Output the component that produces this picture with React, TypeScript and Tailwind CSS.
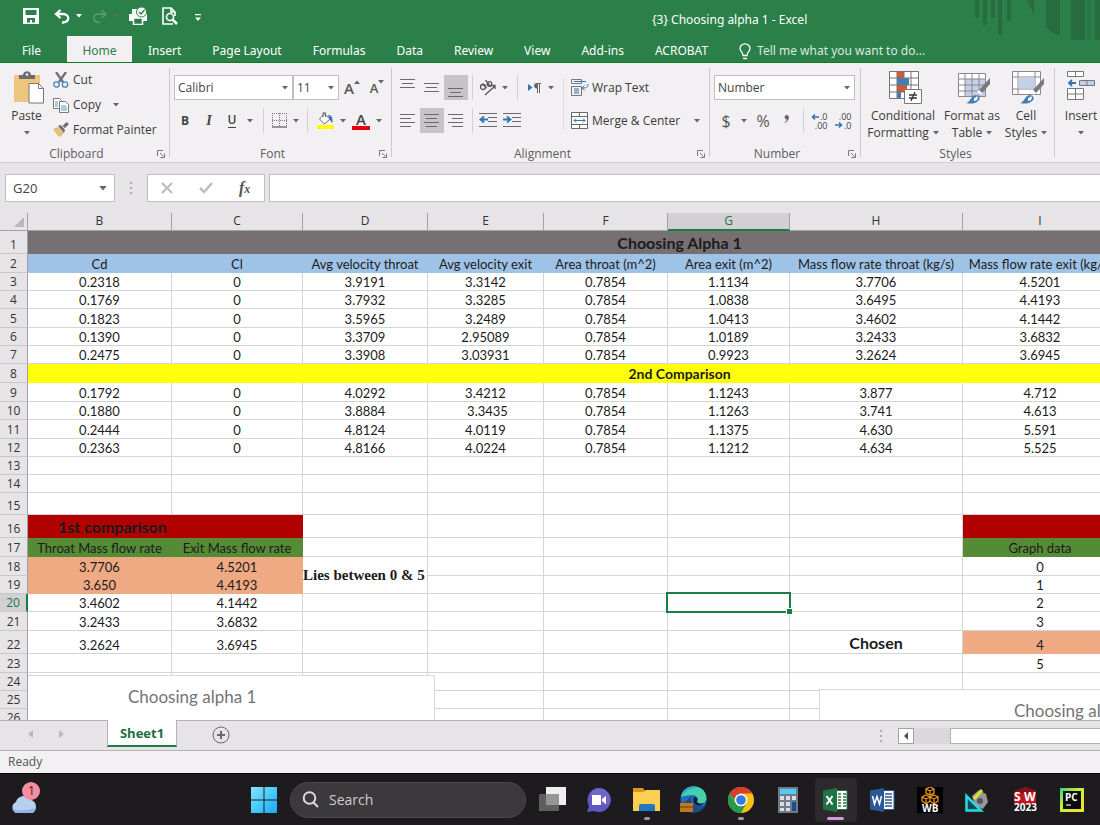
import type { ReactNode } from "react";
import clsx from "clsx";

const TABS = [
  "Insert",
  "Page Layout",
  "Formulas",
  "Data",
  "Review",
  "View",
  "Add-ins",
  "ACROBAT",
];

type Tone = "plain" | "gray" | "blue" | "yellow" | "red" | "green" | "peach";

interface Cell {
  v?: string;
  tone?: Tone;
  span?: number;
  rows?: number;
  cls?: string;
  selected?: boolean;
}

interface SheetRow {
  h: string;
  cells: Cell[];
}

const toneClass: Record<Tone, string> = {
  plain: "border-[#d4d3d5] bg-white",
  gray: "border-[#767073] bg-[#767073]",
  blue: "border-[#9fc3e6] bg-[#9fc3e6]",
  yellow: "border-[#ffff0c] bg-[#ffff0c]",
  red: "border-[#b00000] bg-[#b00000]",
  green: "border-[#568b35] bg-[#568b35]",
  peach: "border-[#efa983] bg-[#efa983]",
};

const COLUMNS = [
  { name: "B", w: "w-[144px]" },
  { name: "C", w: "w-[131px]" },
  { name: "D", w: "w-[125px]" },
  { name: "E", w: "w-[116px]" },
  { name: "F", w: "w-[124px]" },
  { name: "G", w: "w-[122px]" },
  { name: "H", w: "w-[173px]" },
  { name: "I", w: "w-[155px]" },
  { name: "J", w: "w-[214px]" },
];

const text = (...values: string[]): Cell[] => values.map((v) => ({ v }));
const blank = (count: number): Cell[] => Array.from({ length: count }, () => ({}));
const tinted = (tone: Tone, ...values: string[]): Cell[] =>
  values.map((v) => ({ v, tone }));

const ROWS: SheetRow[] = [
  {
    h: "h-[23px]",
    cells: [{ v: "Choosing Alpha 1", tone: "gray", span: 9, cls: "text-[16px] leading-5 font-bold" }],
  },
  {
    h: "h-[19px]",
    cells: tinted(
      "blue",
      "Cd",
      "Cl",
      "Avg velocity throat",
      "Avg velocity exit",
      "Area throat (m^2)",
      "Area exit (m^2)",
      "Mass flow rate throat (kg/s)",
      "Mass flow rate exit (kg/s)",
      ""
    ),
  },
  { h: "h-[18px]", cells: text("0.2318", "0", "3.9191", "3.3142", "0.7854", "1.1134", "3.7706", "4.5201", "") },
  { h: "h-[18px]", cells: text("0.1769", "0", "3.7932", "3.3285", "0.7854", "1.0838", "3.6495", "4.4193", "") },
  { h: "h-[19px]", cells: text("0.1823", "0", "3.5965", "3.2489", "0.7854", "1.0413", "3.4602", "4.1442", "") },
  { h: "h-[18px]", cells: text("0.1390", "0", "3.3709", "2.95089", "0.7854", "1.0189", "3.2433", "3.6832", "") },
  { h: "h-[18px]", cells: text("0.2475", "0", "3.3908", "3.03931", "0.7854", "0.9923", "3.2624", "3.6945", "") },
  {
    h: "h-[19px]",
    cells: [{ v: "2nd Comparison", tone: "yellow", span: 9, cls: "text-[14px] leading-4 font-bold" }],
  },
  { h: "h-[19px]", cells: text("0.1792", "0", "4.0292", "3.4212", "0.7854", "1.1243", "3.877", "4.712", "") },
  {
    h: "h-[18px]",
    cells: [
      ...text("0.1880", "0", "3.8884"),
      { v: "3.3435", cls: "pl-1" },
      ...text("0.7854", "1.1263", "3.741", "4.613", ""),
    ],
  },
  { h: "h-[19px]", cells: text("0.2444", "0", "4.8124", "4.0119", "0.7854", "1.1375", "4.630", "5.591", "") },
  { h: "h-[18px]", cells: text("0.2363", "0", "4.8166", "4.0224", "0.7854", "1.1212", "4.634", "5.525", "") },
  { h: "h-[18px]", cells: blank(9) },
  { h: "h-[18px]", cells: blank(9) },
  { h: "h-[22px]", cells: blank(9) },
  {
    h: "h-[23px]",
    cells: [
      {
        v: "1st comparison",
        tone: "red",
        span: 2,
        cls: "pl-[30px] text-left text-[16px] leading-5 font-bold",
      },
      ...blank(5),
      { tone: "red", span: 2 },
    ],
  },
  {
    h: "h-[19px]",
    cells: [
      ...tinted("green", "Throat Mass flow rate", "Exit Mass flow rate"),
      ...blank(5),
      ...tinted("green", "Graph data", ""),
    ],
  },
  {
    h: "h-[19px]",
    cells: [
      ...tinted("peach", "3.7706", "4.5201"),
      {
        v: "Lies between 0 & 5",
        rows: 2,
        cls: "text-left align-middle font-['Liberation_Serif',serif] text-[15px] leading-5 font-bold",
      },
      ...blank(4),
      ...text("0", ""),
    ],
  },
  {
    h: "h-[18px]",
    cells: [...tinted("peach", "3.650", "4.4193"), ...blank(4), ...text("1", "")],
  },
  {
    h: "h-[18px]",
    cells: [
      ...text("3.4602", "4.1442"),
      ...blank(3),
      { selected: true },
      {},
      ...text("2", ""),
    ],
  },
  { h: "h-[19px]", cells: [...text("3.2433", "3.6832"), ...blank(5), ...text("3", "")] },
  {
    h: "h-[23px]",
    cells: [
      ...text("3.2624", "3.6945"),
      ...blank(4),
      { v: "Chosen", cls: "text-[16px] leading-5 font-bold" },
      ...tinted("peach", "4", ""),
    ],
  },
  { h: "h-[19px]", cells: [...blank(7), ...text("5", "")] },
  { h: "h-[18px]", cells: blank(9) },
  { h: "h-[18px]", cells: blank(9) },
  { h: "h-[18px]", cells: blank(9) },
];

function Caret({ className }: { className?: string }) {
  return (
    <svg viewBox="0 0 6 4" className={clsx("h-1 w-1.5 shrink-0 fill-[#666]", className)}>
      <path d="M0 0h6L3 3.5z" />
    </svg>
  );
}

function Tool({
  label,
  w = "w-6",
  active,
  children,
}: {
  label: string;
  w?: string;
  active?: boolean;
  children: ReactNode;
}) {
  return (
    <button
      type="button"
      aria-label={label}
      className={clsx("flex h-[25px] shrink-0 items-center justify-center", w, active && "bg-[#c6c4c6]")}
    >
      {children}
    </button>
  );
}

function Sep({ w }: { w: string }) {
  return (
    <span className={clsx("flex h-[25px] shrink-0 justify-center", w)}>
      <span className="w-px bg-[#d2d0d2]" />
    </span>
  );
}

function Group({
  name,
  w,
  launcher = true,
  children,
}: {
  name: string;
  w: string;
  launcher?: boolean;
  children: ReactNode;
}) {
  return (
    <section aria-label={name} className={clsx("flex shrink-0", w)}>
      <div className="flex min-w-0 flex-1 flex-col">
        <div className="flex-1">{children}</div>
        <div className="flex h-4 items-center pr-1">
          <span className="flex-1 text-center leading-4 text-[#5f5d5f]">{name}</span>
          {launcher && (
            <button type="button" aria-label={`${name} settings`} className="ml-1">
              <svg viewBox="0 0 8 8" className="h-2 w-2 fill-none stroke-[#777]">
                <path d="M.5 6V.5H6M3 3l3.5 3.5M7.500 3.500v4h-4" />
              </svg>
            </button>
          )}
        </div>
      </div>
      <span className="my-[5px] w-px bg-[#cbc9cb]" />
    </section>
  );
}

function Picker({ label, value, w }: { label: string; value: string; w: string }) {
  return (
    <span className={clsx("relative flex h-[25px] items-center", w)}>
      <select
        aria-label={label}
        className="h-full w-full appearance-none border border-[#c0bec0] bg-white pl-[3px] text-[#444]"
      >
        <option>{value}</option>
      </select>
      <Caret className="pointer-events-none absolute right-[5px]" />
    </span>
  );
}

// bars holds the x range of each line, top to bottom
function Lines({ top = 2, bars }: { top?: number; bars: [number, number][] }) {
  return (
    <svg viewBox="0 0 16 18" className="h-[18px] w-4 stroke-[#6b696b]">
      {bars.map(([a, b], i) => (
        <path key={i} d={`M${a} ${top + i * 4 + 0.5}H${b}`} />
      ))}
    </svg>
  );
}

function TitleBar() {
  return (
    <header className="relative flex h-[63px] shrink-0 flex-col overflow-hidden border-b border-[#107c1c] bg-[#2b804a] font-['Noto_Sans',sans-serif] text-white">
      <svg viewBox="0 0 126 42" className="absolute top-0 right-0 h-[42px] w-[126px] fill-[#266c3f]">
        <path d="M1 0h4v18H1zM9 0h4v25H9zM17 0h4v18h-4zM24 0h4v36l-4-3zM33 0h4v21h-4zM53 0h7v15zM72 0h14v35q-8-1-14-8zM97 0h14v40H97zM121 0h5v40h-5z" />
        <path d="M113 0h4v40h-4z" opacity=".5" />
      </svg>
      <div className="flex h-[37px] items-center">
        <div className="mb-1 flex w-[652px] items-center pl-[23px]">
          <button type="button" aria-label="Save" className="w-[31px]">
            <svg viewBox="0 0 16 16" className="h-4 w-4">
              <path d="M0 0h16v16H0z" fill="#fff" />
              <path d="M2.500 2h11v5h-11zM4 10h8v4.500H9V12H7v2.500H4z" fill="#2b804a" />
            </svg>
          </button>
          <button type="button" aria-label="Undo" className="flex w-[38px] items-center gap-1.5">
            <svg viewBox="0 0 16 15" className="h-[15px] w-4 fill-none stroke-white stroke-[2.3]">
              <path d="M6.500 1L2 5l4.500 4M2 5h7c7 0 7 8 0 8.500H8" />
            </svg>
            <Caret className="fill-white" />
          </button>
          <button type="button" aria-label="Redo" disabled className="flex w-[37px] items-center gap-1.5">
            <svg viewBox="0 0 16 15" className="h-[15px] w-4 fill-none stroke-[#5b9c72] stroke-[1.5]">
              <path d="M9.500 1L14 5l-4.500 4M14 5H7C0 5 0 13 7 13.500h1" />
            </svg>
            <Caret className="fill-[#5b9c72]" />
          </button>
          <button type="button" aria-label="Quick print" className="w-[33px]">
            <svg viewBox="0 0 18 18" className="h-[18px] w-[18px]">
              <path d="M3 2h6v5H3zM0 7h18v7H0z" fill="#fff" />
              <path d="M4.500 11h9v6.500h-9z" fill="#2b804a" stroke="#fff" strokeWidth="1.500" />
              <circle cx="12.500" cy="5" r="5" fill="#fff" stroke="#2b804a" />
              <path d="M10 5l2 2 3.500-4" fill="none" stroke="#2b804a" strokeWidth="1.500" />
            </svg>
          </button>
          <button type="button" aria-label="Print preview" className="w-[33px]">
            <svg viewBox="0 0 16 18" className="h-[18px] w-4 fill-none stroke-white stroke-[1.6]">
              <path d="M11 17H1V1h8l4 4v4" />
              <path d="M9 1v4h4" />
              <circle cx="8" cy="10" r="3.500" />
              <path d="M10.500 12.500l4.500 4.500" strokeWidth="2.500" />
            </svg>
          </button>
          <button type="button" aria-label="Customize toolbar">
            <svg viewBox="0 0 6 8" className="mt-1 h-2 w-1.5 fill-white">
              <path d="M0 0h6v1.300H0zM0 3.500h6L3 7z" />
            </svg>
          </button>
        </div>
        <h1 className="mt-1 text-[12px] leading-4">{"{3} Choosing alpha 1 - Excel"}</h1>
      </div>
      <nav className="flex h-[26px]">
        <button type="button" className="mr-1 w-[63px] pt-1">
          File
        </button>
        <button type="button" className="w-[65px] bg-[#f2f0f2] pt-1 text-[#2f7d50]">
          Home
        </button>
        {TABS.map((tab) => (
          <button key={tab} type="button" className="pt-1 pr-[15px] pl-4">
            {tab}
          </button>
        ))}
        <button type="button" className="flex items-center gap-1.5 pt-1 pl-4 text-[#d9eadf]">
          <svg viewBox="0 0 12 17" className="h-[17px] w-3 fill-none stroke-white stroke-[1.3]">
            <path d="M4 12.500C4 9 1 8.500 1 5.500a5 4.700 0 0 1 10 0C11 8.500 8 9 8 12.500zM4 15.500h4" />
          </svg>
          Tell me what you want to do...
        </button>
      </nav>
    </header>
  );
}

function ClipboardGroup() {
  return (
    <Group name="Clipboard" w="w-[170px]">
      <div className="flex">
        <button type="button" className="flex w-[53px] flex-col items-center pt-2">
          <svg viewBox="0 0 30 33" className="ml-1 h-[33px] w-[30px]">
            <path d="M0 4h26v27H0z" fill="#edc57c" />
            <path d="M5 8V4h4c0-5 8-5 8 0h4v4z" fill="#6e6c6e" />
            <circle cx="13" cy="3.500" r="1.300" fill="#f2f0f2" />
            <path d="M15 12.500h9.500l5 5V32H15z" fill="#fff" stroke="#777" />
            <path d="M24.500 12.500v5h5" fill="none" stroke="#777" />
          </svg>
          <span className="mt-1 leading-4">Paste</span>
          <Caret className="mt-[7px]" />
        </button>
        <div className="flex flex-col gap-2 pt-2">
          <button type="button" className="flex h-[17px] items-center gap-1">
            <svg viewBox="0 0 16 16" className="h-4 w-4 fill-none">
              <path d="M3 0l7 10M13 0L6 10" stroke="#6e6c6e" strokeWidth="2.200" />
              <circle cx="3.500" cy="12.500" r="2.700" stroke="#4a86b8" strokeWidth="1.300" />
              <circle cx="12" cy="12.500" r="2.700" stroke="#4a86b8" strokeWidth="1.300" />
            </svg>
            Cut
          </button>
          <button type="button" className="flex h-[17px] items-center gap-1">
            <svg viewBox="0 0 16 16" className="h-4 w-4 fill-white stroke-[#777]">
              <path d="M.5 1.500h6l2 2v8h-8z" />
              <path d="M6.500 4.500h6l3 3v8h-9z" />
              <path d="M2 5h3M2 7h3M2 9h3M8 9h5M8 11h6M8 13h6" stroke="#5b93c2" />
            </svg>
            Copy
            <Caret className="ml-2" />
          </button>
          <button type="button" className="flex h-[17px] items-center gap-1">
            <svg viewBox="0 0 16 15" className="h-[15px] w-4">
              <path d="M0 7l5-2 6 6-4 4q-3-1-7-8z" fill="#e5be7d" />
              <path d="M5 4l3-1 4 5-1 3zM9.500 4l4-4L16 2l-4 4z" fill="#6e6c6e" />
            </svg>
            Format Painter
          </button>
        </div>
      </div>
    </Group>
  );
}

function FontGroup() {
  return (
    <Group name="Font" w="w-[222px]">
      <div className="flex flex-col gap-2 pt-3">
        <div className="flex pl-1">
          <Picker label="Font name" value="Calibri" w="w-[119px]" />
          <Picker label="Font size" value="11" w="w-[46px]" />
          <Tool label="Increase font size" w="w-[26px]">
            <span className="text-[15px] leading-4 font-semibold text-[#555]">A</span>
            <Caret className="mb-3 rotate-180 fill-[#2f76b0]" />
          </Tool>
          <Tool label="Decrease font size" w="w-6">
            <span className="text-[13px] leading-4 font-semibold text-[#555]">A</span>
            <Caret className="mb-3 fill-[#2f76b0]" />
          </Tool>
        </div>
        <div className="flex pl-[3px] text-[#444]">
          <Tool label="Bold">
            <b>B</b>
          </Tool>
          <Tool label="Italic">
            <i className="font-['Liberation_Serif',serif] text-[14px] font-bold">I</i>
          </Tool>
          <Tool label="Underline" w="w-[22px]">
            <span className="border-b border-[#444] leading-[14px] font-semibold">U</span>
          </Tool>
          <Tool label="Underline style" w="w-[14px]">
            <Caret />
          </Tool>
          <Sep w="w-3" />
          <Tool label="Borders" w="w-5">
            <svg viewBox="0 0 15 15" className="h-[15px] w-[15px] fill-none stroke-[#777]">
              <path d="M.5 0v13M7.500 0v13M14.500 0v13M0 .5h15M0 7.500h15" strokeDasharray="1 1" />
              <path d="M0 14h15" strokeWidth="1.500" />
            </svg>
          </Tool>
          <Tool label="Border style" w="w-[14px]">
            <Caret />
          </Tool>
          <Sep w="w-2" />
          <Tool label="Fill color" w="w-7">
            <svg viewBox="0 0 17 17" className="h-[17px] w-[17px]">
              <path d="M0 13h17v4H0z" fill="#ff0" />
              <path d="M2.500 7l5-5 5.500 5-5.500 5z" fill="#fff" stroke="#666" />
              <path d="M6 5V.8h2.500V5" fill="none" stroke="#666" />
              <path d="M11 3c4 0 5 3 4.500 8-2-1-2-3-3-4.500z" fill="#3a79b0" />
            </svg>
          </Tool>
          <Tool label="Fill choices" w="w-2">
            <Caret />
          </Tool>
          <Tool label="Font color" w="w-7">
            <span className="border-b-4 border-[#e80000] px-1 text-[15px] leading-[14px] font-semibold">A</span>
          </Tool>
          <Tool label="Font color choices" w="w-2">
            <Caret />
          </Tool>
        </div>
      </div>
    </Group>
  );
}

function AlignmentGroup() {
  return (
    <Group name="Alignment" w="w-[318px]">
      <div className="flex pt-3">
        <div className="flex w-[167px] flex-col gap-2 pl-1">
          <div className="flex">
            <Tool label="Top align">
              <Lines top={0} bars={[[0, 15], [2, 13], [0, 15]]} />
            </Tool>
            <Tool label="Middle align">
              <Lines top={4} bars={[[0, 15], [2, 13], [0, 15]]} />
            </Tool>
            <Tool label="Bottom align" active>
              <Lines top={9} bars={[[0, 15], [2, 13], [0, 15]]} />
            </Tool>
            <Sep w="w-2" />
            <Tool label="Orientation">
              <svg viewBox="0 0 18 16" className="h-4 w-[18px] fill-none stroke-[#555] stroke-[1.3]">
                <circle cx="4" cy="7" r="2.500" />
                <path d="M3.500 3.500l4 4.500M6.500 0l5 6.500" />
                <circle cx="10.500" cy="4" r="2.300" />
                <path d="M6 15L16 6M12.500 5.500H16V9" />
              </svg>
            </Tool>
            <Tool label="Orientation choices" w="w-[10px]">
              <Caret />
            </Tool>
            <Sep w="w-[14px]" />
            <Tool label="Text direction" w="w-5">
              <svg viewBox="0 0 13 10" className="h-2.5 w-[13px]">
                <path d="M0 1l4.500 3.500L0 8z" fill="#2f76b0" />
                <path d="M9 0h4v1h-1v9h-1V1h-1v9H9V5.500C5 5.500 5 0 9 0z" fill="#666" />
              </svg>
            </Tool>
            <Tool label="Direction choices" w="w-[14px]">
              <Caret />
            </Tool>
          </div>
          <div className="flex">
            <Tool label="Align left">
              <Lines bars={[[0, 15], [0, 11], [0, 15], [0, 11]]} />
            </Tool>
            <Tool label="Center" active>
              <Lines bars={[[0, 15], [2, 13], [0, 15], [2, 13]]} />
            </Tool>
            <Tool label="Align right">
              <Lines bars={[[0, 15], [4, 15], [0, 15], [4, 15]]} />
            </Tool>
            <Sep w="w-2" />
            <Tool label="Decrease indent">
              <svg viewBox="0 0 18 15" className="h-[15px] w-[18px] fill-none stroke-[#6b696b]">
                <path d="M0 .5h18M9 4.500h9M9 8.500h9M0 13.500h18" />
                <path d="M9 6.500H2M5 3.500l-3.500 3L5 9.500" stroke="#2f76b0" strokeWidth="1.800" />
              </svg>
            </Tool>
            <Tool label="Increase indent">
              <svg viewBox="0 0 18 15" className="h-[15px] w-[18px] fill-none stroke-[#6b696b]">
                <path d="M0 .5h18M9 4.500h9M9 8.500h9M0 13.500h18" />
                <path d="M0 6.500h7M4 3.500l3.500 3L4 9.500" stroke="#2f76b0" strokeWidth="1.800" />
              </svg>
            </Tool>
          </div>
        </div>
        <span className="my-1 mr-[7px] ml-1 w-px bg-[#dddbdd]" />
        <div className="flex flex-col gap-2">
          <button type="button" className="flex h-[25px] items-center gap-[3px]">
            <svg viewBox="0 0 18 17" className="h-[17px] w-[18px] fill-none stroke-[#777]">
              <path d="M.5.500h10v4H.5zM.5 7.500h10v9H.5z" />
              <path d="M3 2.500h12M3 10h5M3 12h5M3 14h5M17 5c0 4-2 4-6 4M13.500 6.500L11 9l2.500 2.500" stroke="#2f76b0" />
            </svg>
            Wrap Text
          </button>
          <button type="button" className="flex h-[25px] items-center gap-1">
            <svg viewBox="0 0 17 17" className="h-[17px] w-[17px] fill-white stroke-[#6b696b]">
              <path d="M.5.500h16v16H.5zM.5 4.500h16M.5 12.500h16M8.500.500v4M8.500 12.500v4" />
              <path d="M3 8.500h11M5 6.500l-2 2 2 2M12 6.500l2 2-2 2" fill="none" stroke="#2f76b0" />
            </svg>
            Merge &amp; Center
            <Caret className="ml-2.5" />
          </button>
        </div>
      </div>
    </Group>
  );
}

function DecimalIcon({ more }: { more?: boolean }) {
  return (
    <span className="relative flex w-[17px] flex-col text-[9px] leading-[9px] text-[#444]">
      <span className="text-right">{more ? ".0" : ".00"}</span>
      <span className="text-right">{more ? ".00" : ".0"}</span>
      <svg
        viewBox="0 0 8 6"
        className={clsx("absolute left-0 h-1.5 w-2 fill-none stroke-[#2f76b0]", more ? "top-0.5" : "bottom-0.5")}
      >
        <path d={more ? "M8 3H1M4 .5L1.500 3 4 5.500" : "M0 3h6.500M4 .5L6.500 3 4 5.500"} strokeWidth="1.500" />
      </svg>
    </span>
  );
}

function NumberGroup() {
  return (
    <Group name="Number" w="w-[151px]">
      <div className="flex flex-col gap-2 pt-3 pl-1">
        <Picker label="Number format" value="Number" w="w-[141px]" />
        <div className="flex text-[#555]">
          <Tool label="Currency">
            <span className="text-[16px]">$</span>
          </Tool>
          <Tool label="Currency choices" w="w-3">
            <Caret />
          </Tool>
          <Tool label="Percent" w="w-[26px]">
            <span className="text-[16px]">%</span>
          </Tool>
          <Tool label="Comma style" w="w-5">
            <svg viewBox="0 0 5 8" className="mb-1 h-2 w-[5px] fill-[#666]">
              <path d="M2.500 0C6 0 6 5 1 8L.5 7.500Q3 6 3 4.500C0 5 0 0 2.500 0z" />
            </svg>
          </Tool>
          <Sep w="w-[14px]" />
          <Tool label="Increase decimal" w="w-[18px]">
            <DecimalIcon more />
          </Tool>
          <Tool label="Decrease decimal" w="w-[30px]">
            <DecimalIcon />
          </Tool>
        </div>
      </div>
    </Group>
  );
}

function Brush() {
  return (
    <>
      <path d="M32 7v6l-8 9-3-3z" fill="#7a787a" />
      <path d="M21 19l3 3-2 2-3-3z" fill="#fff" />
      <path d="M8 32c5-1 4-7 10-8 4 1 5 4 2 6-3 3-7 3-12 2z" fill="#3f7fb5" />
      <path d="M16 27q2 0 3-2l1 2q-1 3-4 3z" fill="#fff" />
    </>
  );
}

function BigTool({ lines, w, children }: { lines: [string, string?]; w: string; children: ReactNode }) {
  return (
    <button type="button" className={clsx("flex shrink-0 flex-col items-center pt-2", w)}>
      {children}
      <span className="mt-1 leading-4 whitespace-nowrap">{lines[0]}</span>
      <span className="mt-px flex h-4 items-center gap-1 leading-4">
        {lines[1]}
        <Caret />
      </span>
    </button>
  );
}

function StylesGroup() {
  return (
    <Group name="Styles" w="w-[194px]" launcher={false}>
      <div className="flex pl-[5px]">
        <BigTool lines={["Conditional", "Formatting"]} w="w-[74px]">
          <svg viewBox="0 0 33 33" className="ml-1 h-[33px] w-[33px]">
            <path d="M.5.500h29v27H.5z" fill="#fff" />
            <path d="M8 1h7v6H8zM8 14h10v7H8z" fill="#d4572f" />
            <path d="M8 7h12v7H8zM8 21h4v7H8z" fill="#3f7fb5" />
            <path
              d="M.5.500h29v27H.5zM.5 7h29M.5 14h29M.5 21h29M8 .5v27M15 .5v6.500M22 .5v27"
              fill="none"
              stroke="#777"
            />
            <path d="M15.500 18.500h17v14h-17z" fill="#fff" stroke="#777" />
            <path d="M20 24h8M20 27h8M26 21l-4 9" stroke="#333" strokeWidth="1.300" />
          </svg>
        </BigTool>
        <BigTool lines={["Format as", "Table"]} w="w-[64px]">
          <svg viewBox="0 0 33 33" className="ml-1 h-[33px] w-[33px]">
            <path d="M.5 2.500h27v23H.5z" fill="#fff" />
            <path d="M7 8h20v17H7z" fill="#c3d0e8" />
            <path
              d="M.5 2.500h27v23H.5zM.5 8h27M.5 14h27M.5 20h27M7 2.500v23M14 2.500v23M21 2.500v23"
              fill="none"
              stroke="#8a888a"
            />
            <Brush />
          </svg>
        </BigTool>
        <BigTool lines={["Cell", "Styles"]} w="w-[44px]">
          <svg viewBox="0 0 33 33" className="ml-1 h-[33px] w-[33px]">
            <path
              d="M.5.500h28v23H.5zM.5 6h28M.5 18h28M6 .5v23M23 .5v23"
              fill="#fff"
              stroke="#8a888a"
            />
            <path d="M6.500 6.500h16v11h-16z" fill="#c3d0e8" />
            <Brush />
          </svg>
        </BigTool>
      </div>
    </Group>
  );
}

function Ribbon() {
  return (
    <div className="flex h-[100px] shrink-0 overflow-hidden border-b border-[#cfcdcf] bg-[#f2f0f2] text-[#3b3a3b]">
      <ClipboardGroup />
      <FontGroup />
      <AlignmentGroup />
      <NumberGroup />
      <StylesGroup />
      <div className="pl-[3px]">
        <BigTool lines={["Insert"]} w="w-[46px]">
          <svg viewBox="0 0 28 33" className="h-[33px] w-7 fill-white stroke-[#777]">
            <path d="M.5.500h16v5H.5zM8.500.500v5M.5 17.500h16v11H.5zM.5 23h16M8.500 17.500v11" />
            <path d="M12.500 9.500h15v5h-15zM20 9.500v5" fill="#c3d0e8" />
            <path d="M9 12H2M5 9l-3 3 3 3" fill="none" stroke="#2f76b0" strokeWidth="1.800" />
          </svg>
        </BigTool>
      </div>
    </div>
  );
}

function Dots() {
  return (
    <svg viewBox="0 0 2 12" className="h-3 w-0.5 shrink-0 fill-[#aaa8aa]">
      <path d="M0 0h2v2H0zM0 5h2v2H0zM0 10h2v2H0z" />
    </svg>
  );
}

function FormulaBar() {
  return (
    <div className="flex h-[50px] shrink-0 items-center bg-[#e6e4e6] pl-[5px]">
      <div className="flex h-7 w-[110px] items-center border border-[#c0bec0] bg-white">
        <input
          aria-label="Name box"
          defaultValue="G20"
          className="w-[93px] bg-transparent pl-[7px] text-[13px] text-[#444] outline-none"
        />
        <button type="button" aria-label="Name list">
          <Caret className="h-[5px] w-2" />
        </button>
      </div>
      <span className="flex w-8 justify-center">
        <Dots />
      </span>
      <div className="flex h-7 w-[118px] items-center border border-[#c0bec0] bg-white">
        <button type="button" aria-label="Cancel" className="flex flex-1 justify-center">
          <svg viewBox="0 0 12 12" className="h-3 w-3 stroke-[#bdbbbd] stroke-2">
            <path d="M1 1l10 10M11 1L1 11" />
          </svg>
        </button>
        <button type="button" aria-label="Enter" className="flex flex-1 justify-center">
          <svg viewBox="0 0 14 12" className="h-3 w-3.5 fill-none stroke-[#bdbbbd] stroke-[2.5]">
            <path d="M1 6l4 4 8-9" />
          </svg>
        </button>
        <button
          type="button"
          className="flex-1 font-['Liberation_Serif',serif] text-[16px] font-bold text-[#555] italic"
        >
          f<span className="text-[12px]">x</span>
        </button>
      </div>
      <input
        aria-label="Formula"
        className="ml-1 h-7 min-w-0 flex-1 border border-r-0 border-[#c0bec0] bg-white px-2 outline-none"
      />
    </div>
  );
}

function Sheet() {
  return (
    <main className="relative min-h-0 flex-1 overflow-hidden bg-white">
      <table className="w-[1332px] table-fixed border-separate border-spacing-0 text-center font-['Lato',sans-serif] text-[13px] leading-4 text-[#1c1c1c]">
        <thead className="font-['Open_Sans',sans-serif] text-[12px] text-[#333]">
          <tr className="h-[18px] bg-[#e6e4e6]">
            <th className="w-7 border-r border-b border-[#a3a1a3] p-0" aria-label="Select all">
              <svg viewBox="0 0 10 10" className="ml-3.5 h-2.5 w-2.5 fill-[#b9b7b9]">
                <path d="M10 0v10H0z" />
              </svg>
            </th>
            {COLUMNS.map(({ name, w }) => (
              <th
                key={name}
                scope="col"
                className={clsx(
                  "border-r p-0 align-top font-normal",
                  w,
                  name === "G"
                    ? "border-b-2 border-r-[#a3a1a3] border-b-[#1a7d42] bg-[#d2d0d2] text-[#217346]"
                    : "border-b border-[#a3a1a3]"
                )}
              >
                {name}
              </th>
            ))}
          </tr>
        </thead>
        <tbody>
          {ROWS.map((row, i) => (
            <tr key={i} className={row.h}>
              <th
                scope="row"
                className={clsx(
                  "border-b border-b-[#c9c7c9] p-0 align-bottom font-['Open_Sans',sans-serif] text-[12px] font-normal",
                  i === 19
                    ? "border-r-2 border-r-[#1a7d42] bg-[#d2d0d2] text-[#217346]"
                    : "border-r border-r-[#a3a1a3] bg-[#e6e4e6] text-[#333]"
                )}
              >
                {i + 1}
              </th>
              {row.cells.map((cell, c) => (
                <td
                  key={c}
                  colSpan={cell.span}
                  rowSpan={cell.rows}
                  className={clsx(
                    "border-r border-b p-0 whitespace-nowrap",
                    !cell.rows && "align-bottom",
                    cell.selected ? "relative" : "overflow-hidden",
                    toneClass[cell.tone ?? "plain"],
                    cell.cls
                  )}
                >
                  {cell.v}
                  {cell.selected && (
                    <span className="absolute -inset-0.5 border-2 border-[#1a7d42]">
                      <span className="absolute -right-[3px] -bottom-[3px] h-1.5 w-1.5 border-t border-l border-white bg-[#1a7d42]" />
                    </span>
                  )}
                </td>
              ))}
            </tr>
          ))}
        </tbody>
      </table>
      <figure className="absolute top-[462px] left-7 h-[200px] w-[407px] border-t border-r border-[#d9d7d9] bg-white pt-[7px] pl-[100px] font-['Lato',sans-serif] text-[17px] leading-7 text-[#757375]">
        Choosing alpha 1
      </figure>
      <figure className="absolute top-[476px] left-[819px] h-[200px] w-[520px] border-t border-l border-[#d9d7d9] bg-white pt-[7px] pl-[194px] font-['Lato',sans-serif] text-[17px] leading-7 text-[#757375]">
        Choosing alpha 1
      </figure>
    </main>
  );
}

function SheetTabs() {
  return (
    <div className="flex h-[31px] shrink-0 border-t border-b border-[#b3b1b3] bg-[#e6e4e6]">
      <div className="flex w-[107px] items-center gap-[26px] pb-1 pl-7">
        <button type="button" aria-label="Previous sheet">
          <svg viewBox="0 0 5 8" className="h-2 w-[5px] fill-[#b9b7b9]">
            <path d="M5 0v8L0 4z" />
          </svg>
        </button>
        <button type="button" aria-label="Next sheet">
          <svg viewBox="0 0 5 8" className="h-2 w-[5px] fill-[#b9b7b9]">
            <path d="M0 0v8l5-4z" />
          </svg>
        </button>
      </div>
      <button
        type="button"
        className="-mt-px h-[27px] w-[70px] border-x border-b-2 border-x-[#b3b1b3] border-b-[#1a7d42] bg-white text-[13px] font-bold text-[#1a6e3f]"
      >
        Sheet1
      </button>
      <button type="button" aria-label="New sheet" className="ml-[35px] pb-0.5">
        <svg viewBox="0 0 18 18" className="h-[18px] w-[18px] fill-none stroke-[#6b696b]">
          <circle cx="9" cy="9" r="8" />
          <path d="M5 9h8M9 5v8" strokeWidth="2" />
        </svg>
      </button>
      <div className="ml-auto flex w-[220px] items-center">
        <Dots />
        <button
          type="button"
          aria-label="Scroll left"
          className="ml-4 flex h-4 w-4 items-center justify-center border border-[#a3a1a3] bg-white"
        >
          <svg viewBox="0 0 4 8" className="h-2 w-1 fill-[#555]">
            <path d="M4 0v8L0 4z" />
          </svg>
        </button>
        <span className="h-4 w-9 bg-[#dad8da]" />
        <span className="h-4 flex-1 border border-r-0 border-[#b3b1b3] bg-white" />
      </div>
    </div>
  );
}

function TaskbarApp({
  label,
  active,
  dot,
  children,
}: {
  label: string;
  active?: boolean;
  dot?: boolean;
  children: ReactNode;
}) {
  return (
    <button
      type="button"
      aria-label={label}
      className={clsx(
        "relative flex h-[44px] w-[42px] items-center justify-center rounded-sm",
        active && "bg-[#2c2a2d]"
      )}
    >
      {children}
      {active && <span className="absolute bottom-0.5 h-[3px] w-[17px] rounded-full bg-[#cf9be0]" />}
      {dot && <span className="absolute bottom-0.5 h-[3px] w-1.5 rounded-full bg-[#9b999b]" />}
    </button>
  );
}

function Taskbar() {
  return (
    <footer className="flex h-[52px] shrink-0 items-center overflow-hidden border-t border-black bg-[#1d1b1e]">
      <button type="button" aria-label="Weather" className="flex w-[251px] pl-2.5">
        <svg viewBox="0 0 30 34" className="-mt-1 h-[34px] w-[30px]">
          <path d="M6 32a6 6 0 0 1 0-11c2-7 12-8 15-2 6 1 7 11 1 13z" fill="#b7d0f2" />
          <path d="M3 28q10 3 23-1-1 5-5 5H6q-2-1-3-4z" fill="#94b3ea" />
          <circle cx="21" cy="10" r="9" fill="#f78ca2" />
          <text x="18" y="14" fill="#3a1a22" className="text-[12px]">
            1
          </text>
        </svg>
      </button>
      <button type="button" aria-label="Start">
        <svg viewBox="0 0 26 26" className="h-[26px] w-[26px]">
          <defs>
            <linearGradient id="start" x1="0" y1="0" x2="1" y2="1">
              <stop offset="0" stopColor="#8be0fb" />
              <stop offset=".5" stopColor="#45cdfb" />
              <stop offset="1" stopColor="#1fa4f5" />
            </linearGradient>
          </defs>
          <path d="M0 0h12.500v12.500H0zM13.500 0H26v12.500H13.500zM0 13.500h12.500V26H0zM13.500 13.500H26V26H13.500z" fill="url(#start)" />
        </svg>
      </button>
      <label className="ml-[13px] flex h-9 w-[236px] shrink-0 items-center gap-2.5 rounded-full border border-[#4a484b] bg-[#3b393c] pl-[11px] text-[14px]">
        <svg viewBox="0 0 17 17" className="h-[17px] w-[17px] fill-none stroke-[#dddbdd] stroke-2">
          <circle cx="7.500" cy="7" r="5.800" />
          <path d="M11.500 11.500l4.500 4.500" />
        </svg>
        <input
          aria-label="Search"
          placeholder="Search"
          className="w-[150px] bg-transparent outline-none placeholder:text-[#cfcdcf]"
        />
      </label>
      <div className="ml-[5px] flex w-[562px] shrink-0 justify-between">
        <TaskbarApp label="Task view">
          <svg viewBox="0 0 27 25" className="h-[25px] w-[27px]">
            <path d="M7 0h20v18H7z" fill="#efedef" />
            <path d="M0 7h20v17H0z" fill="#777" opacity=".75" />
          </svg>
        </TaskbarApp>
        <TaskbarApp label="Chat">
          <svg viewBox="0 0 26 26" className="h-[26px] w-[26px]">
            <path d="M13 1a12 12 0 1 1-5 23l-7 1 2-6A12 12 0 0 1 13 1z" fill="#5f58c0" />
            <path d="M13 1a12 12 0 0 1 11 15Q14 22 4 7q3-6 9-6z" fill="#6f66cc" />
            <path d="M6 8h9v10H6zM16 12l4-3v8l-4-3z" fill="#fff" />
          </svg>
        </TaskbarApp>
        <TaskbarApp label="File explorer" dot>
          <svg viewBox="0 0 28 24" className="h-6 w-7">
            <path d="M0 0h10l2 3v6H0z" fill="#d8971c" />
            <path d="M0 4h10l3-2h14v21H0z" fill="#fbcf4f" />
            <path d="M6 23v-5q0-2 2-2h12q2 0 2 2v5z" fill="#2277c4" />
          </svg>
        </TaskbarApp>
        <TaskbarApp label="Edge">
          <svg viewBox="0 0 27 27" className="h-[27px] w-[27px]">
            <circle cx="13.500" cy="13.500" r="13" fill="#1c6fc4" />
            <path d="M1 11C3-4 26-3 26.500 12c0 6-7 7-10 4 3-3 0-7-4-7-5 0-8 1-11.500 2z" fill="#46cfa9" />
            <path d="M1 11C3 1 12-1 17 2 9 2 4 6 1 11z" fill="#2aa7dd" />
            <path d="M12 10c-3 6 3 13 14 9-4 7-14 9-19 5-3-6 0-12 5-14z" fill="#174a8e" />
            <path d="M14 11q5 0 3 5 3 3 7 1-3 4-8 2-4-3-2-8z" fill="#131c2b" />
            <path d="M0 17h13v9H0z" fill="#c1771c" />
            <path d="M0 21h13M4.500 17v-1.500h4V17" fill="none" stroke="#6f3b0c" />
          </svg>
        </TaskbarApp>
        <TaskbarApp label="Chrome" dot>
          <svg viewBox="0 0 26 26" className="h-[26px] w-[26px]">
            <circle cx="13" cy="13" r="13" fill="#fbc016" />
            <path d="M1.700 6.500A13 13 0 0 0 13 26l5.500-10L13 13 7 16z" fill="#239a4c" />
            <path d="M1.700 6.500L8 17l5-10z" fill="#239a4c" />
            <path d="M1.700 6.500A13 13 0 0 1 24.300 6.500H13q-5 0-6.500 5z" fill="#de3b2f" />
            <circle cx="13" cy="13" r="6.300" fill="#fff" />
            <circle cx="13" cy="13" r="4.800" fill="#3579dd" />
          </svg>
        </TaskbarApp>
        <TaskbarApp label="Calculator">
          <svg viewBox="0 0 20 26" className="h-[26px] w-5">
            <path d="M0 0h20v26H0z" fill="#6f7d8a" />
            <path d="M2 2h16v5H2z" fill="#55cdf0" />
            <path d="M2 9h4v4H2zM8 9h4v4H8zM14 9h4v4h-4zM2 15h4v4H2zM8 15h4v4H8zM2 21h4v3H2zM8 21h4v3H8z" fill="#dcdee0" />
            <path d="M14 15h4v9h-4z" fill="#164f8f" />
          </svg>
        </TaskbarApp>
        <TaskbarApp label="Excel" active>
          <svg viewBox="0 0 25 24" className="h-6 w-[25px]">
            <path d="M12 2.500h12v19H12z" fill="#fff" stroke="#217346" />
            <path d="M15 6h3M20 6h3M15 9h3M20 9h3M15 12h3M20 12h3M15 15h3M20 15h3M15 18h3M20 18h3" stroke="#217346" strokeWidth="1.500" />
            <path d="M0 2.500L14 0v24L0 21.500z" fill="#217346" />
            <path d="M3.500 8l6 8.500M9.500 8l-6 8.500" stroke="#fff" strokeWidth="2" />
          </svg>
        </TaskbarApp>
        <TaskbarApp label="Word">
          <svg viewBox="0 0 25 24" className="h-6 w-[25px]">
            <path d="M12 2.500h12v19H12z" fill="#fff" stroke="#2b5797" />
            <path d="M15 6h7M15 9h7M15 12h7M15 15h7M15 18h7" stroke="#2b5797" strokeWidth="1.300" />
            <path d="M0 2.500L14 0v24L0 21.500z" fill="#2b5797" />
            <path d="M2.500 8l2 8L7 8.500 9.500 16l2-8" fill="none" stroke="#fff" strokeWidth="1.500" />
          </svg>
        </TaskbarApp>
        <TaskbarApp label="Workbench">
          <svg viewBox="0 0 26 26" className="h-[26px] w-[26px] fill-none stroke-[#e8951c] stroke-[1.3]">
            <path d="M0 0h26v26H0z" fill="#000" stroke="none" />
            <path d="M13 0l4 2v4l-4 2-4-2V2zM9 2l4 2 4-2M13 4v4M9 8l4 2v4l-4 3-4-3v-4zM5 10l4 2 4-2M9 12v4M17 8l4 2v4l-4 3-4-3v-4zM13 10l4 2 4-2M17 12v4" />
            <text x="5" y="25" fill="#fff" stroke="none" className="text-[10px] font-bold">
              WB
            </text>
          </svg>
        </TaskbarApp>
        <TaskbarApp label="Draft">
          <svg viewBox="0 0 24 24" className="h-6 w-6">
            <path d="M7 8l7-6 7 4 2 8-5 7-8-3z" fill="#98969a" />
            <circle cx="15" cy="13" r="3" fill="#565458" />
            <path d="M1.500 8v14.500H16z" fill="#0e4a52" stroke="#25dce5" strokeWidth="2.500" />
            <path d="M9 11l8-9" stroke="#dbe52c" strokeWidth="3" />
          </svg>
        </TaskbarApp>
        <TaskbarApp label="SolidWorks">
          <svg viewBox="0 0 26 26" className="h-[26px] w-[26px]">
            <path d="M2 5l11-5 11 4v13H2z" fill="#c11725" />
            <path d="M2 5l11-5 11 4-11 3z" fill="#841019" />
            <g fill="#fff" className="font-bold">
              <text x="2" y="14" className="text-[12px]">
                S
              </text>
              <text x="12" y="14" className="text-[12px]">
                W
              </text>
              <text x="2" y="24" className="text-[10px]">
                2023
              </text>
            </g>
          </svg>
        </TaskbarApp>
        <TaskbarApp label="PyCharm">
          <svg viewBox="0 0 24 24" className="h-6 w-6">
            <defs>
              <linearGradient id="pc" x1="0" y1="0" x2="1" y2="1">
                <stop offset="0" stopColor="#27d789" />
                <stop offset=".4" stopColor="#c5ee3a" />
                <stop offset="1" stopColor="#f0e52c" />
              </linearGradient>
            </defs>
            <path d="M0 0h24v24H0z" fill="url(#pc)" />
            <path d="M3 3h18v18H3z" fill="#0b0b0b" />
            <text x="5" y="12.500" fill="#fff" className="text-[10px] font-bold">
              PC
            </text>
            <path d="M6 17h5" stroke="#ddd" strokeWidth="1.300" />
          </svg>
        </TaskbarApp>
      </div>
    </footer>
  );
}

export default function App() {
  return (
    <div className="flex h-screen flex-col overflow-hidden font-['Open_Sans',sans-serif] text-[12px] leading-4">
      <TitleBar />
      <Ribbon />
      <FormulaBar />
      <Sheet />
      <SheetTabs />
      <div className="h-[22px] shrink-0 bg-[#f2f0f2] pl-2 leading-[22px] text-[#555]">Ready</div>
      <Taskbar />
    </div>
  );
}
